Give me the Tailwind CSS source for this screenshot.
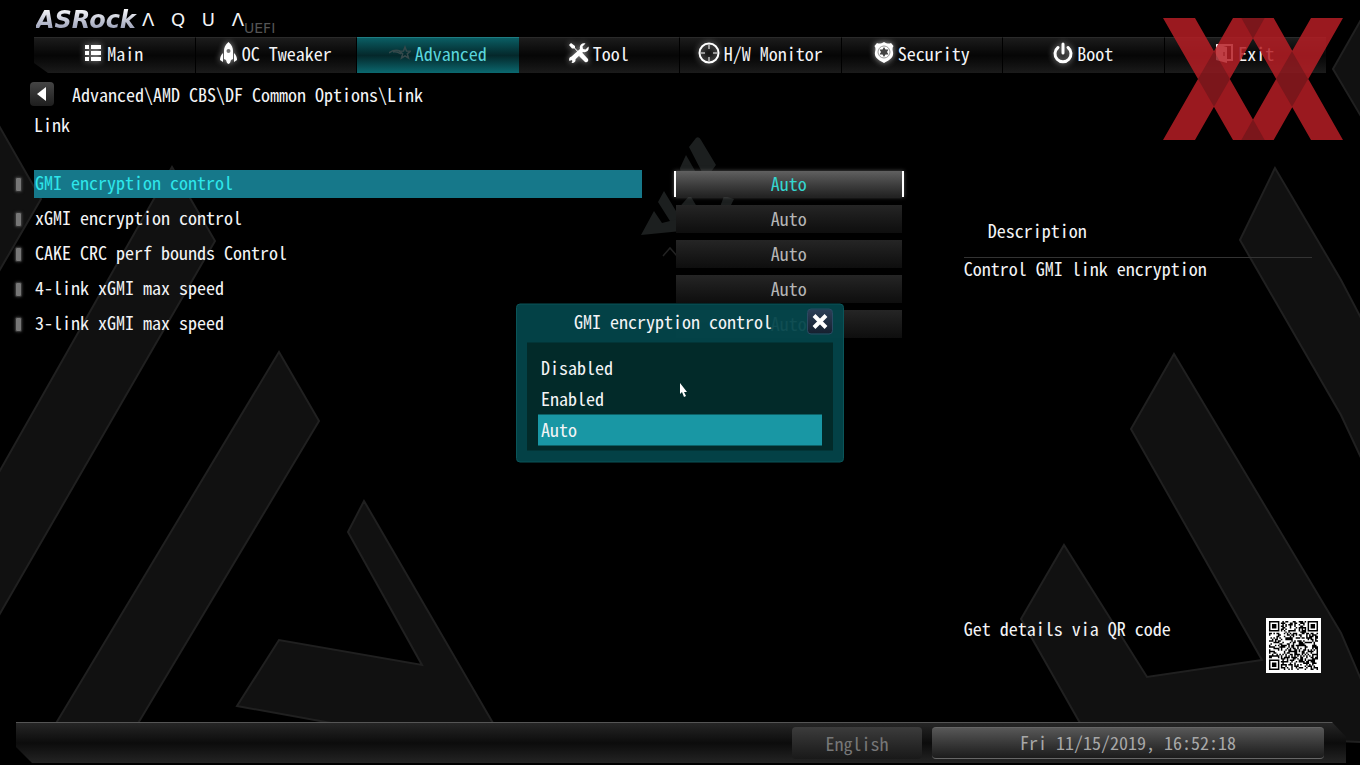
<!DOCTYPE html>
<html lang="en">
<head>
    <meta charset="UTF-8">
    <meta name="viewport" content="width=device-width, initial-scale=1.0">
    <title>ASRock AQUA UEFI</title>
    <script src="https://cdn.jsdelivr.net/npm/@tailwindcss/browser@4"></script>
</head>
<body class="relative min-h-screen flex flex-col overflow-x-hidden bg-black text-gray-100 text-lg leading-6 font-['Noto_Sans_Mono_CJK_JP','Liberation_Mono',monospace]">

    <!-- Background artwork -->
    <svg class="absolute inset-0 w-full h-full" viewBox="0 0 1360 765" preserveAspectRatio="xMidYMid slice" aria-hidden="true">
        <g fill="#111111" stroke="#202020" stroke-width="2">
            <path d="M-2 124 41 199 -2 273Z"/>
            <path d="M172 167 215 241 -2 617 -2 474Z"/>
            <path d="M279 352 319 421 134 730 52 730Z"/>
            <path d="M364 501 497 730 370 730 237 706 279 640 422 665 348 532Z"/>
            <path d="M1362 18 1333 69 1362 118Z"/>
            <path d="M1275 168 1240 240 1341 415 1362 460 1362 320 1341 280Z"/>
            <path d="M1174 354 1131 429 1262 660 1147 677 1064 545 1021 619 1084 730 1362 742 1362 682 1341 633Z"/>
        </g>
        <g fill="#1c1f1f">
            <path d="M696 138q3-2 5 2l15 25-8 11h-4l-15-29Z"/>
            <path d="M686 155l12 21h-17l-1-8Z"/>
            <path d="M664 191l12 20 14-16 20 34h-20l-20-8-12-19Z"/>
            <path d="M654 211l8 12 40-10v16l-61 6Z"/>
            <path d="M724 196l10 3-4 8h-10Z"/>
        </g>
        <path d="M663 256l7-8 7 8" fill="none" stroke="#222" stroke-width="1.5"/>
    </svg>

    <!-- Logo -->
    <header class="relative">
        <div class="h-[37px] pl-9 flex items-start" aria-label="ASRock AQUA UEFI">
            <span class="mt-2 w-[106px] text-2xl leading-6 font-bold italic font-['DejaVu_Sans',sans-serif] bg-linear-to-b from-white to-[#8d93ad] bg-clip-text text-transparent">ASRock</span>
            <span class="mt-2 w-[102px] flex justify-between text-lg leading-6 font-['DejaVu_Sans',sans-serif]"><span>Λ</span><span>Q</span><span>U</span><span>Λ</span></span>
            <span class="mt-5 text-sm leading-4 text-[#555] font-['DejaVu_Sans',sans-serif]">UEFI</span>
        </div>

        <nav class="h-9 mx-[34px] grid grid-cols-8 [clip-path:polygon(0_0,100%_0,100%_100%,14px_100%,0_26px)]">
            <a href="#" class="pb-1.5 flex items-center justify-center gap-1 border-t border-[#2a2a2a] border-r border-r-black bg-linear-to-b from-[#1c1c1c] via-[#060606] to-[#1b1b1b]">
                <svg class="w-[18px] h-5 drop-shadow-[0_0_3px_#aaa]" viewBox="0 0 18 20" fill="#fff" aria-hidden="true"><path d="M0 2h4v4H0zM6 2h10v4H6zM0 8h4v4H0zM6 8h10v4H6zM0 14h4v4H0zM6 14h10v4H6z"/></svg>
                Main
            </a>
            <a href="#" class="pb-1.5 flex items-center justify-center gap-1 border-t border-[#2a2a2a] border-r border-r-black bg-linear-to-b from-[#1c1c1c] via-[#060606] to-[#1b1b1b]">
                <svg class="w-[18px] h-[22px] drop-shadow-[0_0_3px_#aaa]" viewBox="0 0 18 22" fill="#fff" aria-hidden="true"><path fill-rule="evenodd" d="M8.500 0C12 3 13 6 13 9v8l-2 1-1 3-1.500 1L7 21l-1-3-2-1V9C4 6 5 3 8.500 0ZM8.500 7a2 2 0 1 0 0 4 2 2 0 0 0 0-4Z"/><path d="M3 11v9l-3-2c0-3 1-5 3-7ZM14 11v9l3-2c0-3-1-5-3-7Z"/></svg>
                OC Tweaker
            </a>
            <a href="#" aria-current="page" class="pb-1.5 flex items-center justify-center gap-1 border-t border-[#1f7c82] bg-linear-to-b from-[#0a5e64] via-[#04282b] to-[#0b6970] text-[#59d5dc]">
                <svg class="w-[22px] h-4" viewBox="0 0 22 16" fill="none" stroke="#35494b" stroke-width="1.5" aria-hidden="true"><path d="M16 2l1.500 4 4 .2-3.200 2.600 1.200 4.200L16 10.800 12.500 13l1.200-4.200L10.500 6.200l4-.2ZM0 8c4-3 8-3 11-2M4 7c3-1 5 0 8 2"/></svg>
                Advanced
            </a>
            <a href="#" class="pb-1.5 flex items-center justify-center gap-1 border-t border-[#2a2a2a] border-r border-r-black bg-linear-to-b from-[#1c1c1c] via-[#060606] to-[#1b1b1b]">
                <svg class="w-5 h-5 drop-shadow-[0_0_3px_#aaa]" viewBox="0 0 20 20" fill="#fff" aria-hidden="true"><path d="M2 0l4 3v2l5 5 2-.5 6 6.500c1 2-1 4-3 3l-6-6 .5-2-5-5.500H3L0 2Z"/><path d="M19.500 3.500l-3 3-2.500-.500-.5-2.500 3-3C13-.500 10 2 11 6l-8.500 7.500c-2 .5-3 2.500-2 4.500l2-1 1 1-1 1.800c2.500.5 4.500-1 4-3.500L14 9c4 .8 6.500-2 5.500-5.500Z"/></svg>
                Tool
            </a>
            <a href="#" class="pb-1.5 flex items-center justify-center gap-1 border-t border-[#2a2a2a] border-r border-r-black bg-linear-to-b from-[#1c1c1c] via-[#060606] to-[#1b1b1b]">
                <svg class="w-[22px] h-[22px] drop-shadow-[0_0_3px_#999]" viewBox="0 0 22 22" fill="none" stroke="#fff" aria-hidden="true"><circle cx="11" cy="11" r="9.500" stroke-width="2"/><path d="M11 2v5M11 15v5M2 11h5M15 11h5" stroke="#bbb" stroke-width="1.500"/></svg>
                H/W Monitor
            </a>
            <a href="#" class="pb-1.5 flex items-center justify-center gap-1 border-t border-[#2a2a2a] border-r border-r-black bg-linear-to-b from-[#1c1c1c] via-[#060606] to-[#1b1b1b]">
                <svg class="w-5 h-[21px] drop-shadow-[0_0_3px_#aaa]" viewBox="0 0 20 21" aria-hidden="true"><path fill="#fff" d="M3 1c2 1 4 .8 7-1 3 1.800 5 2 7 1l2.500 3c-1.500 2-1 4-.5 6 1 5-3 8-9 11C4 18 0 15 1 10c.5-2 1-4-.5-6Z"/><circle cx="10" cy="10" r="6" fill="none" stroke="#999"/><path fill="#444" d="M10 5l1.500 2.500h3L13 10l1.500 2.500h-3L10 15l-1.500-2.500h-3L7 10 5.500 7.500h3Z"/></svg>
                Security
            </a>
            <a href="#" class="pb-1.5 flex items-center justify-center gap-1 border-t border-[#2a2a2a] border-r border-r-black bg-linear-to-b from-[#1c1c1c] via-[#060606] to-[#1b1b1b]">
                <svg class="w-5 h-[22px] drop-shadow-[0_0_3px_#aaa]" viewBox="0 0 20 22" fill="none" stroke="#fff" stroke-width="3" stroke-linecap="round" aria-hidden="true"><path d="M10 2v9M5 5.500a8 8 0 1 0 10 0"/></svg>
                Boot
            </a>
            <a href="#" class="pb-1.5 flex items-center justify-center gap-1 border-t border-[#2a2a2a] bg-linear-to-b from-[#1c1c1c] via-[#060606] to-[#1b1b1b]">
                <svg class="w-[18px] h-5" viewBox="0 0 18 20" aria-hidden="true"><path d="M1 2h15v15h-5" fill="none" stroke="#fff" stroke-width="2"/><path d="M0 1l11 3v16L0 17Z" fill="#fff"/><path d="M8 9v4" stroke="#555" stroke-width="1.500"/></svg>
                Exit
            </a>
        </nav>
    </header>

    <!-- Watermark -->
    <svg class="absolute z-10 top-[18px] right-[17px] w-[180px] h-[122px] pointer-events-none" viewBox="98 54 540 366" aria-hidden="true">
        <g opacity="0.85">
            <path fill="#b61e25" d="M98 54h96l209 366h-95ZM308 54h95L194 420H98ZM333 54h97l208 366h-96ZM542 54h96L430 420h-97Z"/>
            <path fill="#911a20" d="M333 54h70l-35 62ZM333 420h70l-35-62ZM251 154l48 83-48 83-48-83ZM485 154l48 83-48 83-48-83Z"/>
        </g>
    </svg>

    <div class="relative mt-[9px] pl-[30px] flex items-center gap-[18px]">
        <button type="button" aria-label="Back" class="w-6 h-6 flex items-center justify-center rounded-sm bg-linear-to-b from-[#454545] to-[#1e1e1e]">
            <svg class="w-[10px] h-[14px]" viewBox="0 0 10 14" fill="#fff" aria-hidden="true"><path d="M9 0v14L0 7Z"/></svg>
        </button>
        <p>Advanced\AMD CBS\DF Common Options\Link</p>
    </div>
    <h1 class="relative mt-1.5 pl-[34px]">Link</h1>

    <main class="relative flex-1 grid grid-cols-[888fr_348fr] gap-[60px] pl-[15px] pr-12 pt-[34px] pb-[49px]">
        <ul class="flex flex-col gap-[7px]">
            <li class="h-7 flex items-center">
                <span class="w-[19px]"><span class="block w-[7px] h-[15px] rounded-xs bg-[#777] border border-[#333] shadow-[0_0_3px_#444]"></span></span>
                <label for="gmi" class="flex-1 h-7 pl-px bg-[#16788a] text-[#2ee6ea]">GMI encryption control</label>
                <select id="gmi" class="ml-8 w-[230px] h-[26px] pb-[3px] appearance-none text-center border-x-2 border-white bg-linear-to-b from-[#606060] to-[#222] text-[#35d6cf] shadow-[0_0_4px_#555]">
                    <option>Disabled</option><option>Enabled</option><option selected>Auto</option>
                </select>
            </li>
            <li class="h-7 flex items-center">
                <span class="w-[19px]"><span class="block w-[7px] h-[15px] rounded-xs bg-[#777] border border-[#333] shadow-[0_0_3px_#444]"></span></span>
                <label for="xgmi" class="flex-1 h-7 pl-px">xGMI encryption control</label>
                <select id="xgmi" class="ml-8 w-[230px] h-7 pb-[3px] appearance-none text-center border-x-2 border-transparent bg-clip-padding bg-linear-to-b from-[#252525] to-[#0e0e0e] text-[#b5b5b5]">
                    <option>Disabled</option><option>Enabled</option><option selected>Auto</option>
                </select>
            </li>
            <li class="h-7 flex items-center">
                <span class="w-[19px]"><span class="block w-[7px] h-[15px] rounded-xs bg-[#777] border border-[#333] shadow-[0_0_3px_#444]"></span></span>
                <label for="cake" class="flex-1 h-7 pl-px">CAKE CRC perf bounds Control</label>
                <select id="cake" class="ml-8 w-[230px] h-7 pb-[3px] appearance-none text-center border-x-2 border-transparent bg-clip-padding bg-linear-to-b from-[#252525] to-[#0e0e0e] text-[#b5b5b5]">
                    <option>Auto</option><option>Manual</option>
                </select>
            </li>
            <li class="h-7 flex items-center">
                <span class="w-[19px]"><span class="block w-[7px] h-[15px] rounded-xs bg-[#777] border border-[#333] shadow-[0_0_3px_#444]"></span></span>
                <label for="link4" class="flex-1 h-7 pl-px">4-link xGMI max speed</label>
                <select id="link4" class="ml-8 w-[230px] h-7 pb-[3px] appearance-none text-center border-x-2 border-transparent bg-clip-padding bg-linear-to-b from-[#252525] to-[#0e0e0e] text-[#b5b5b5]">
                    <option>Auto</option>
                </select>
            </li>
            <li class="h-7 flex items-center">
                <span class="w-[19px]"><span class="block w-[7px] h-[15px] rounded-xs bg-[#777] border border-[#333] shadow-[0_0_3px_#444]"></span></span>
                <label for="link3" class="flex-1 h-7 pl-px">3-link xGMI max speed</label>
                <select id="link3" class="ml-8 w-[230px] h-7 pb-[3px] appearance-none text-center border-x-2 border-transparent bg-clip-padding bg-linear-to-b from-[#252525] to-[#0e0e0e] text-[#b5b5b5]">
                    <option>Auto</option>
                </select>
            </li>
        </ul>

        <aside class="flex flex-col justify-between pt-12">
            <div>
                <h2 class="pl-6 pb-[15px] border-b border-[#333]">Description</h2>
                <p class="leading-5">Control GMI link encryption</p>
            </div>
            <div class="flex items-start justify-between -mr-[9px]">
                <p class="leading-5">Get details via QR code</p>
                <svg id="qr" class="w-[55px] h-[55px] bg-white" viewBox="-2 -2 37 37" role="img" aria-label="QR code"></svg>
            </div>
        </aside>
    </main>

    <!-- Status bar -->
    <footer class="relative ml-4 mr-[14px] mb-[2px] h-[41px] pr-[22px] flex items-center justify-end gap-[10px] border-t border-[#555] bg-linear-to-b from-[#262626] via-[#0c0c0c] to-[#242424] text-[#a8a8a8] [clip-path:polygon(0_0,calc(100%-14px)_0,100%_15px,100%_100%,16px_100%,0_25px)]">
        <button type="button" class="w-[130px] h-8 rounded-sm bg-linear-to-b from-[#3c3c3c] to-[#191919] text-[#777]">English</button>
        <p class="w-[392px] h-8 leading-7 text-center rounded-sm border-y border-[#666] bg-linear-to-b from-[#585858] to-[#1c1c1c]">Fri 11/15/2019, 16:52:18</p>
    </footer>

    <!-- Option popup -->
    <div role="dialog" aria-labelledby="popupTitle" class="absolute left-1/2 top-1/2 -translate-1/2 w-[328px] pt-1 px-[10px] pb-[11px] rounded-sm border border-[#0a5559] bg-[#03464b]/93">
        <div class="flex items-start">
            <h2 id="popupTitle" class="flex-1 pl-3 text-center">GMI encryption control</h2>
            <button type="button" id="closePopup" aria-label="Close" class="w-[26px] h-[26px] flex items-center justify-center rounded-sm border border-[#2b4a62] bg-linear-to-b from-[#2c3f58] to-[#16202f]">
                <svg class="w-4 h-4" viewBox="0 0 16 16" stroke="#fff" stroke-width="4" aria-hidden="true"><path d="M2 2l12 12M14 2L2 14"/></svg>
            </button>
        </div>
        <ul role="listbox" aria-labelledby="popupTitle" class="mt-2 pt-[10px] px-[11px] pb-[5px] bg-[#022a29]">
            <li role="option" class="h-[31px] pl-[3px] leading-7">Disabled</li>
            <li role="option" class="h-[31px] pl-[3px] leading-7">Enabled</li>
            <li role="option" aria-selected="true" class="h-[31px] pl-[3px] leading-7 bg-[#1997a4]">Auto</li>
        </ul>
    </div>

    <!-- Pointer -->
    <svg class="absolute left-1/2 top-1/2 w-2 h-[14px] pointer-events-none" viewBox="0 0 8 14" fill="#fff" aria-hidden="true"><path d="M0 0v11l2-2 2 5 2-1-2-4h3Z"/></svg>

    <script>
        const qr = document.getElementById('qr');
        const size = 33;
        let seed = 20191115;

        function nextBit() {
            seed = (seed * 1103515245 + 12345) % 2147483648;
            return (seed >> 16) & 1;
        }

        function finder(x, y) {
            return `M${x} ${y}h7v7h-7zM${x + 1} ${y + 1}v5h5v-5zM${x + 2} ${y + 2}h3v3h-3z`;
        }

        let d = finder(0, 0) + finder(size - 7, 0) + finder(0, size - 7);
        for (let y = 0; y < size; y++) {
            for (let x = 0; x < size; x++) {
                const inFinder = (x < 8 && (y < 8 || y > size - 9)) || (x > size - 9 && y < 8);
                if (!inFinder && nextBit()) d += `M${x} ${y}h1v1h-1z`;
            }
        }
        qr.innerHTML = `<path fill="#000" d="${d}"/>`;

        document.getElementById('closePopup').addEventListener('click', (event) => {
            event.currentTarget.closest('[role="dialog"]').classList.add('hidden');
        });
    </script>
</body>
</html>
